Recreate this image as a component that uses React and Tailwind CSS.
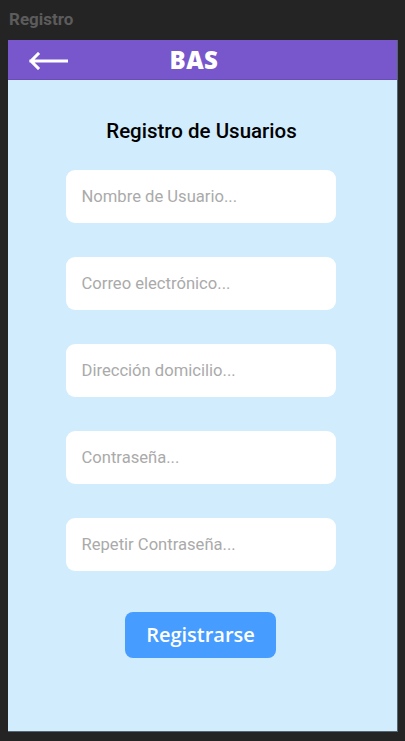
import React from 'react'

const fields = [
  'Nombre de Usuario...',
  'Correo electrónico...',
  'Dirección domicilio...',
  'Contraseña...',
  'Repetir Contraseña...',
]

function App() {
  return (
    <div className="w-[405px] h-[741px] bg-[#242424] font-['Roboto',sans-serif] overflow-hidden">
      <div className="h-[40px] px-[9px] pt-[8px] text-[17px] font-bold text-[#5c5c5c] leading-[22px]">Registro</div>

      <div className="mx-[8px] w-[390px] h-[692px] flex flex-col bg-[#d0ecfd] border-b border-[#56656f] border-r border-r-[#56656f]">
        <div className="h-[40px] bg-[#7856cc] border-b border-[#6a4db8] flex items-center relative">
          <svg className="absolute left-[20px] top-[12px]" width="40" height="18" viewBox="0 0 40 18" fill="none">
            <path d="M39 9H3M10 2L3 9l7 7" stroke="white" strokeWidth="3" strokeLinecap="square" />
          </svg>
          <div className="w-full text-center text-white font-extrabold text-[24px] tracking-[0.5px] font-['Open_Sans',sans-serif] leading-none pr-[17px]">BAS</div>
        </div>

        <div className="flex flex-col items-center pt-[38px] pr-[4px]">
          <h1 className="text-[20.5px] font-medium text-black leading-[26px] mb-[26px] pl-[2px]">Registro de Usuarios</h1>
          <div className="flex flex-col gap-[34px]">
            {fields.map((f) => (
              <input
                key={f}
                type="text"
                placeholder={f}
                className="w-[270px] h-[53px] bg-white rounded-[9px] px-[16px] text-[16.6px] text-[#333] placeholder:text-[#aaaaaa] outline-none"
              />
            ))}
          </div>
          <button className="mt-[41px] w-[151px] h-[46px] rounded-[8px] bg-[#469cff] text-white text-[20px] font-semibold font-['Open_Sans',sans-serif]">
            Registrarse
          </button>
        </div>
      </div>
    </div>
  )
}

export default App
